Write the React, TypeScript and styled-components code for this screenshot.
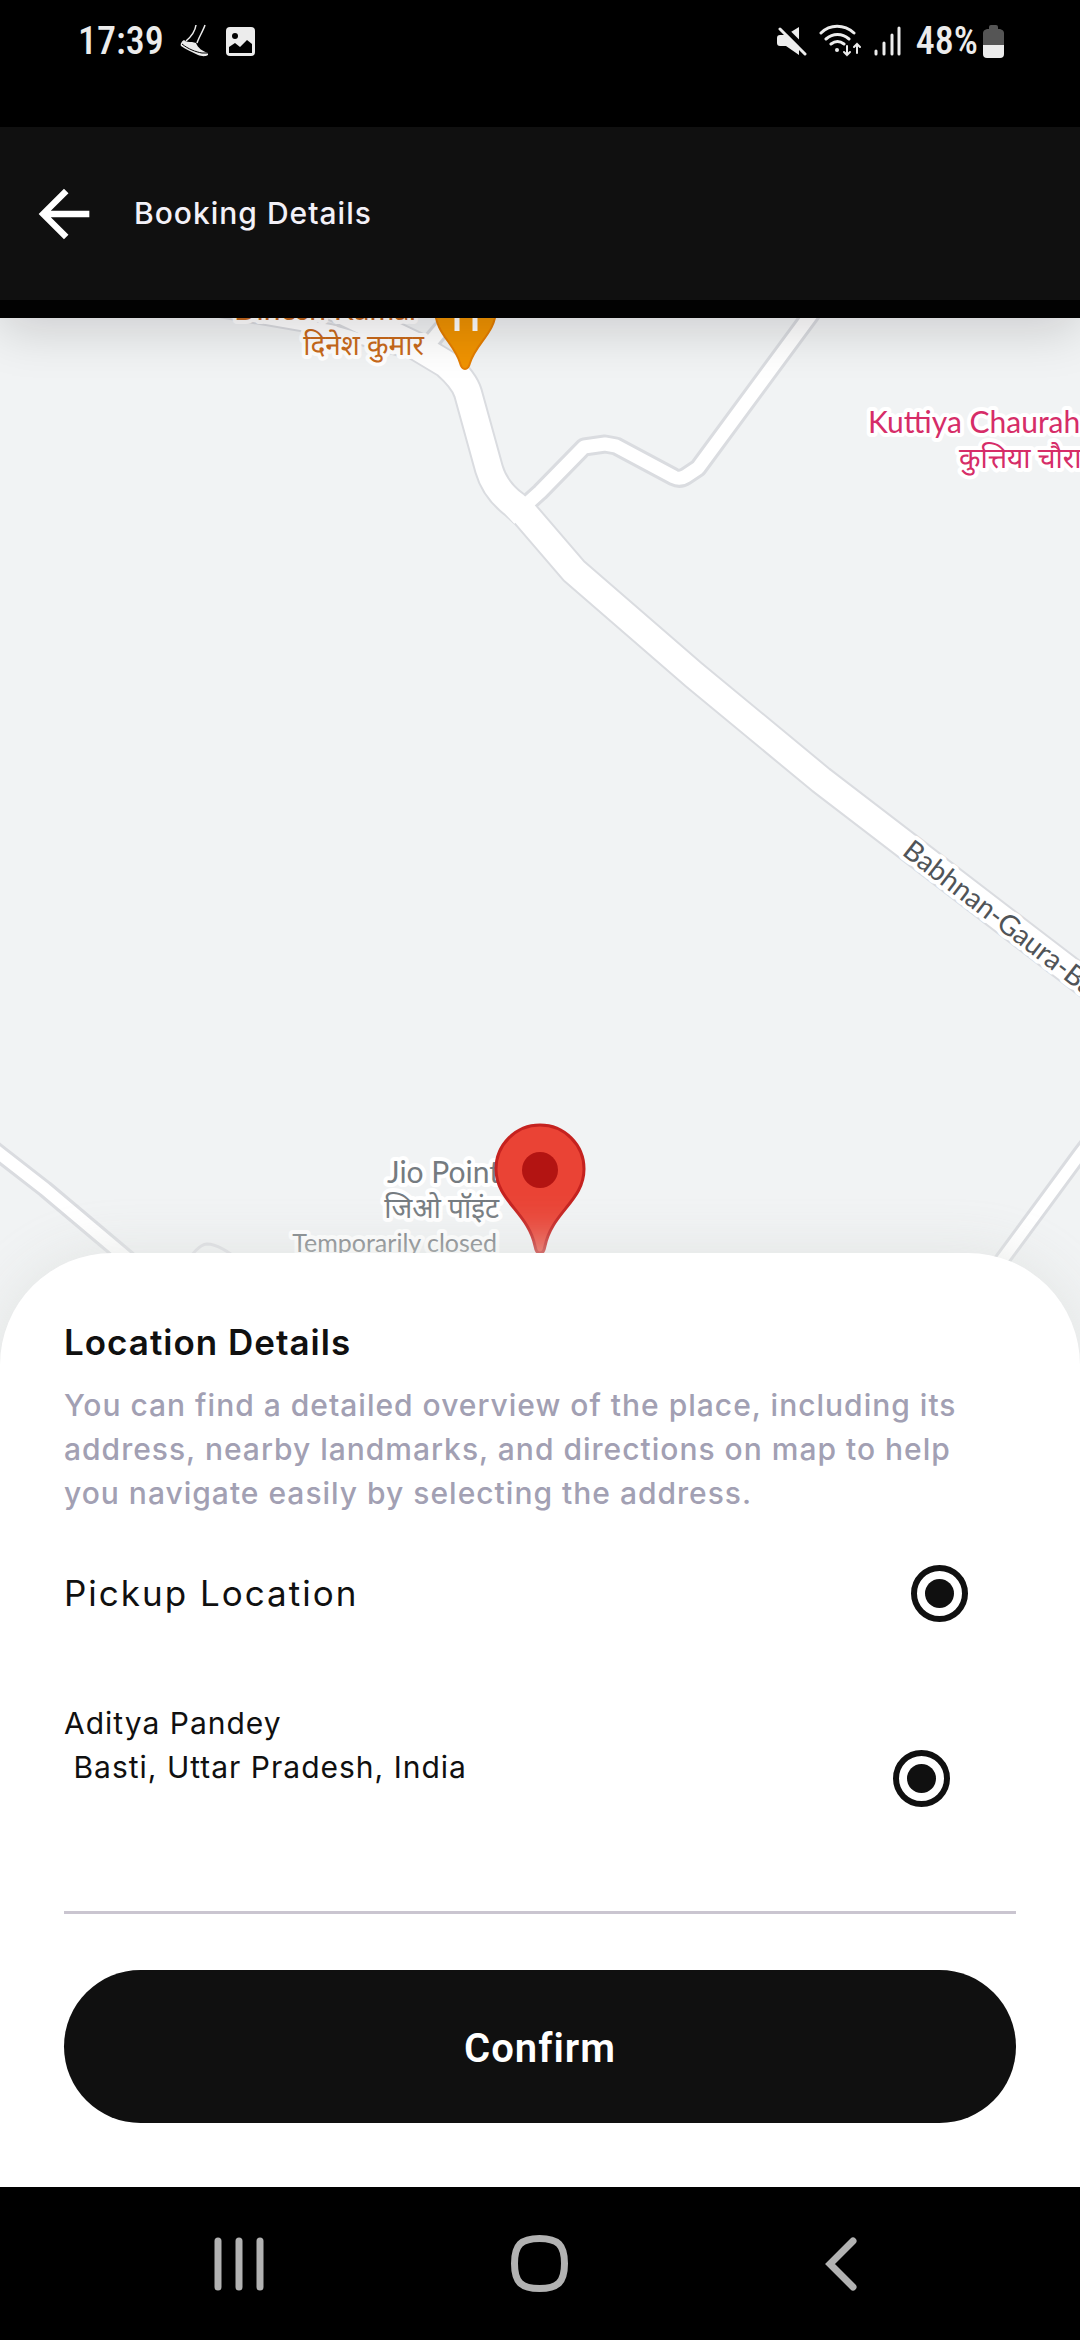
import React, { useState } from "react";
import styled, { createGlobalStyle } from "styled-components";

const ink = "#101010";
const light = "#ececec";

const GlobalStyle = createGlobalStyle`
  *, *::before, *::after { box-sizing: border-box; }
  body { margin: 0; background: #000; }
  button, input { font: inherit; }
`;

const Screen = styled.div`
  min-height: 100vh;
  display: flex;
  flex-direction: column;
  background: #000;
  color: ${ink};
  font-family: Inter, "Noto Sans", sans-serif;
`;

const StatusBar = styled.div`
  height: 127px;
  padding: 16px 76px 0 78px;
  display: flex;
  align-items: flex-start;
  justify-content: space-between;
  color: ${light};
`;

const StatusGroup = styled.div<{ $gap: number }>`
  height: 50px;
  display: flex;
  align-items: center;
  gap: ${(p) => p.$gap}px;
  svg { display: block; }
`;

const StatusText = styled.span`
  font-family: "Roboto Condensed", "Liberation Sans Narrow", Roboto, sans-serif;
  font-size: 38px;
  font-weight: 500;
  line-height: 48px;
`;

const Header = styled.header`
  position: relative;
  z-index: 1;
  height: 191px;
  border-bottom: 18px solid #020202;
  padding: 0 26px;
  display: flex;
  align-items: center;
  gap: 32px;
  background: ${ink};
  box-shadow: 0 12px 48px rgba(10, 0, 10, 0.16);
`;

const IconButton = styled.button`
  border: 0;
  padding: 0;
  background: none;
  display: grid;
  place-items: center;
  cursor: pointer;
  svg { display: block; }
`;

const HeaderTitle = styled.h1`
  margin: 0;
  padding-bottom: 2px;
  color: #f3f1f8;
  font-size: 30px;
  font-weight: 500;
  line-height: 44px;
  letter-spacing: 1px;
`;

const MapArea = styled.div`
  flex: 1;
  min-height: 600px;
  margin-bottom: -112px;
  background: #f1f3f4;
  overflow: hidden;
  display: flex;
  svg { display: block; width: 100%; flex: 1; }
`;

const MapLabel = styled.text<{ $size: number }>`
  font-family: Lato, "Noto Sans Devanagari", "Noto Sans", sans-serif;
  font-size: ${(p) => p.$size}px;
  paint-order: stroke;
  stroke: #fff;
  stroke-width: 8px;
  stroke-linejoin: round;
`;

const Sheet = styled.main`
  position: relative;
  z-index: 1;
  padding: 64px;
  background: #fff;
  border-radius: 112px 112px 0 0;
  box-shadow: 0 0 52px rgba(222, 225, 223, 0.8);
  display: flex;
  flex-direction: column;
`;

const SheetTitle = styled.h2`
  margin: 0 0 16px;
  font-size: 35px;
  font-weight: 600;
  line-height: 50px;
  letter-spacing: 1px;
`;

const Description = styled.p`
  margin: 0 0 38px;
  padding-right: 48px;
  color: #a2a0b3;
  font-size: 30px;
  font-weight: 500;
  line-height: 44px;
  letter-spacing: 1px;
`;

const Choice = styled.label<{ $inset: number; $height: number }>`
  min-height: ${(p) => p.$height}px;
  padding-right: ${(p) => p.$inset}px;
  display: flex;
  align-items: center;
  justify-content: space-between;
  cursor: pointer;
`;

const ChoiceTitle = styled.span`
  font-size: 35px;
  font-weight: 400;
  line-height: 50px;
  letter-spacing: 2px;
`;

const Address = styled.span`
  align-self: flex-start;
  white-space: pre-wrap;
  font-size: 30px;
  font-weight: 400;
  line-height: 44px;
  letter-spacing: 1px;
`;

const Radio = styled.input`
  appearance: none;
  flex: none;
  width: 57px;
  height: 57px;
  margin: 0;
  border: 6px solid ${ink};
  border-radius: 50%;
  display: grid;
  place-items: center;
  &:checked::before {
    content: "";
    width: 29px;
    height: 29px;
    border-radius: 50%;
    background: ${ink};
  }
`;

const Choices = styled.div`
  display: flex;
  flex-direction: column;
  gap: 68px;
`;

const Divider = styled.hr`
  width: 100%;
  margin: 56px 0;
  border: 0;
  height: 3px;
  background: #cac5d0;
`;

const ConfirmButton = styled.button`
  height: 153px;
  border: 0;
  padding: 4px 0 0;
  border-radius: 77px;
  background: ${ink};
  color: #fff;
  font-family: Roboto, sans-serif;
  font-size: 40px;
  font-weight: 600;
  line-height: 48px;
  letter-spacing: 1px;
  cursor: pointer;
`;

const NavBar = styled.nav`
  position: relative;
  z-index: 2;
  height: 153px;
  padding: 0 88px;
  background: #000;
  color: #b2b2b2;
  display: flex;
  align-items: center;
  ${IconButton} { flex: 1; color: inherit; }
`;

const ShoeIcon = () => (
  <svg width="30" height="34" viewBox="0 0 30 34" fill="none" stroke={light}>
    <path d="M16 1c-1 7-4 11-10 16M25 1c-2 6-6 12-8 18" strokeWidth="1.5" />
    <path d="M4 16c2 2 5 2 8 2l4 1c2 5 6 8 12 10v2c-3 2-7 1-10 0C12 28 5 25 1 22c-1-2 1-5 3-6z" fill={light} stroke="none" />
    <path d="M2 20c6 5 14 8 20 9h7" stroke="#000" strokeWidth="1" />
  </svg>
);

const ImageIcon = () => (
  <svg width="29" height="29" viewBox="0 0 29 29">
    <rect width="29" height="29" rx="4" fill={light} />
    <circle cx="9" cy="9" r="3" fill="#000" />
    <path d="M3 26v-6l6-4 5 4 7-7 5 4v9z" fill="#000" />
  </svg>
);

const MuteIcon = () => (
  <svg width="30" height="32" viewBox="0 0 30 32">
    <path d="M22 2v28L9 21H3c-2 0-3-1-3-3v-5c0-2 1-3 3-3h6z" fill={light} />
    <path d="M5 1l26 26" stroke="#000" strokeWidth="5" />
    <path d="M3 4l25 25" stroke={light} strokeWidth="3" strokeLinecap="round" />
  </svg>
);

const WifiIcon = () => (
  <svg width="43" height="34" viewBox="0 0 43 34" fill="none" stroke={light} strokeWidth="3" strokeLinecap="round">
    <path d="M2 9c9-9 23-9 33 0M7 15c7-6 16-6 23 0M12 20c4-3 9-3 13 0" />
    <circle cx="18" cy="26" r="2" fill={light} stroke="none" />
    <path d="M28 22v9m-3-3l3 3 3-3M38 29v-9m-3 3l3-3 3 3" strokeWidth="2" />
  </svg>
);

const SignalIcon = () => (
  <svg width="30" height="32" viewBox="0 0 30 32" stroke={light} strokeWidth="3" strokeLinecap="round">
    <path d="M2 26v3M10 18v11M18 10v19M25 3v26" />
  </svg>
);

const BatteryIcon = () => (
  <svg width="21" height="33" viewBox="0 0 21 33">
    <path d="M6 4V2q0-2 2-2h5q2 0 2 2v2h2q4 1 4 4v12H0V8q0-3 4-4z" fill="#555" />
    <path d="M0 20h21v9q0 4-4 4H4q-4 0-4-4z" fill={light} />
  </svg>
);

const roads = [
  { d: "M-10 1146L0 1154L45 1189L128 1259L180 1305", outer: 18, inner: 12 },
  { d: "M1100 1128L1080 1154L1002 1260L960 1315", outer: 17, inner: 11 },
  { d: "M190 306L330 330L400 350", outer: 14, inner: 10 },
  { d: "M428 345L456 312", outer: 19, inner: 13 },
  { d: "M510 519L540 492L584 447L605 444L616 446L674 477Q680 480 686 476L698 468L815 309", outer: 19, inner: 13 },
  { d: "M330 305L416 346L446 364Q464 380 468 393L489 469Q495 490 515 505L525 514L574 571L694 675L821 780L1100 994", outer: 30, inner: 26 },
];

const MapCanvas = () => (
  <svg viewBox="0 318 1080 1047" preserveAspectRatio="xMidYMin slice" role="img" aria-label="Map">
    <g fill="none" strokeLinejoin="round">
      <path d="M184 1268Q196 1245 207 1244Q220 1244 244 1264" stroke="#dcdde2" strokeWidth="3" />
      {roads.map((r) => <path key={r.d} d={r.d} stroke="#dadce0" strokeWidth={r.outer} />)}
      {roads.map((r) => <path key={r.d} d={r.d} stroke="#fff" strokeWidth={r.inner} />)}
    </g>
    <MapLabel $size={30} x="420" y="320" textAnchor="end" fill="#c5691c">Dinesh Kumar</MapLabel>
    <MapLabel $size={28} x="424" y="355" textAnchor="end" fill="#c96a1a">दिनेश कुमार</MapLabel>
    <path d="M465 369c-3 0-4-2-5-6c-6-20-25-30-25-54a30 30 0 0 1 61 0c0 24-20 34-26 54c-1 4-2 6-5 6z" fill="#f09300" stroke="#e37d00" strokeWidth="2" />
    <path d="M457 310v21M475 310v21" stroke="#fff" strokeWidth="5" />
    <MapLabel $size={30} x="868" y="433" fill="#d62d68">Kuttiya Chauraha</MapLabel>
    <MapLabel $size={28} x="959" y="468" fill="#d62d68">कुत्तिया चौराहा</MapLabel>
    <MapLabel $size={28} transform="translate(901 854) rotate(37.6)" fill="#505458">Babhnan-Gaura-Ba</MapLabel>
    <MapLabel $size={30} x="500" y="1183" textAnchor="end" fill="#757b80">Jio Point</MapLabel>
    <MapLabel $size={28} x="499" y="1218" textAnchor="end" fill="#757b80">जिओ पॉइंट</MapLabel>
    <MapLabel $size={25} x="497" y="1252" textAnchor="end" fill="#7b8084">Temporarily closed</MapLabel>
    <path d="M540 1253c-3 0-4-2-5-7c-7-34-39-45-39-77a44 44 0 0 1 88 0c0 32-32 43-39 77c-1 5-2 7-5 7z" fill="#ea4335" stroke="#c5221f" strokeWidth="3" />
    <circle cx="540" cy="1170" r="18" fill="#b31412" />
  </svg>
);

export default function App() {
  const [pickup, setPickup] = useState(true);
  const [saved, setSaved] = useState(true);
  return (
    <>
      <GlobalStyle />
      <Screen>
        <StatusBar>
          <StatusGroup $gap={16}>
            <StatusText>17:39</StatusText>
            <ShoeIcon />
            <ImageIcon />
          </StatusGroup>
          <StatusGroup $gap={12}>
            <MuteIcon />
            <WifiIcon />
            <SignalIcon />
            <StatusGroup $gap={5}>
              <StatusText>48%</StatusText>
              <BatteryIcon />
            </StatusGroup>
          </StatusGroup>
        </StatusBar>
        <Header>
          <IconButton type="button" aria-label="Back">
            <svg width="76" height="76" viewBox="0 0 24 24" fill="#fff">
              <path d="M20 11H7.83l5.59-5.59L12 4l-8 8 8 8 1.41-1.41L7.83 13H20v-2z" />
            </svg>
          </IconButton>
          <HeaderTitle>Booking Details</HeaderTitle>
        </Header>
        <MapArea>
          <MapCanvas />
        </MapArea>
        <Sheet>
          <SheetTitle>Location Details</SheetTitle>
          <Description>
            You can find a detailed overview of the place, including its address, nearby landmarks, and directions on
            map to help you navigate easily by selecting the address.
          </Description>
          <Choices>
            <Choice $inset={48} $height={80}>
              <ChoiceTitle>Pickup Location</ChoiceTitle>
              <Radio type="radio" name="pickup" checked={pickup} onChange={() => setPickup(true)} />
            </Choice>
            <Choice $inset={66} $height={154}>
              <Address>{"Aditya Pandey\n Basti, Uttar Pradesh, India"}</Address>
              <Radio type="radio" name="saved" checked={saved} onChange={() => setSaved(true)} />
            </Choice>
          </Choices>
          <Divider />
          <ConfirmButton type="button">Confirm</ConfirmButton>
        </Sheet>
        <NavBar>
          <IconButton type="button" aria-label="Recent apps">
            <svg width="50" height="54" viewBox="0 0 50 54" stroke="currentColor" strokeWidth="7" strokeLinecap="round">
              <path d="M4 4v46M25 4v46M46 4v46" />
            </svg>
          </IconButton>
          <IconButton type="button" aria-label="Home">
            <svg width="57" height="57" viewBox="0 0 57 57" fill="none" stroke="currentColor" strokeWidth="7">
              <path d="M28.500 3.500C47 3.500 53.500 10 53.500 28.500S47 53.500 28.500 53.500 3.500 47 3.500 28.500 10 3.500 28.500 3.500z" />
            </svg>
          </IconButton>
          <IconButton type="button" aria-label="Back">
            <svg width="32" height="54" viewBox="0 0 32 54" fill="none" stroke="currentColor" strokeWidth="7" strokeLinecap="round">
              <path d="M28 4L5 27l23 23" />
            </svg>
          </IconButton>
        </NavBar>
      </Screen>
    </>
  );
}
